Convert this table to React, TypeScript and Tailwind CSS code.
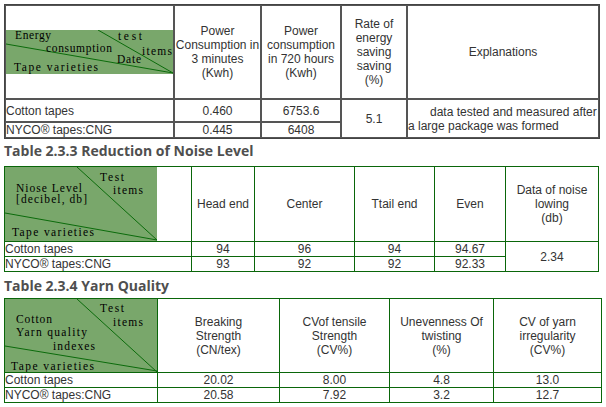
import React from "react";

const LINE = "#0b6b0b";
const FILL = "#79a76b";

type Label = { t: string; x: number; y: number; w: number };

// green diagonal header cell, drawn like the original bitmap
const DiagonalHead: React.FC<{
  w: number;
  h: number;
  lines: [number, number, number, number][];
  labels: Label[];
}> = ({ w, h, lines, labels }) => (
  <svg width={w} height={h} className="block">
    <rect x={0} y={0} width={w} height={h} fill={FILL} />
    {lines.map((l, i) => (
      <line key={i} x1={l[0]} y1={l[1]} x2={l[2]} y2={l[3]} stroke={LINE} strokeWidth={1} />
    ))}
    {labels.map((l) => (
      <text
        key={l.t}
        x={l.x}
        y={l.y}
        textLength={l.w}
        lengthAdjust="spacing"
        fontFamily='"Liberation Serif", serif'
        fontSize={11.5}
        fill="#000"
      >
        {l.t}
      </text>
    ))}
  </svg>
);

const td1 = "border border-[#555] p-0 text-center align-middle";
const td2 = "border border-[#0a660a] p-0 text-center align-middle";
const title =
  "h-[22px] text-[14px] leading-[22px] font-bold text-[#4f4f4f] font-['Open_Sans',sans-serif]";

const App: React.FC = () => {
  return (
    <div className="w-[606px] h-[407px] bg-white pl-[4px] pt-[4px] text-[12px] leading-[14px] text-[#333] font-['Liberation_Sans',Arial,sans-serif]">
      {/* Table 2.3.2 energy */}
      <table className="table-fixed border-separate border-spacing-0 border border-[#444] w-[596px]">
        <colgroup>
          <col className="w-[169px]" />
          <col className="w-[87px]" />
          <col className="w-[80px]" />
          <col className="w-[66px]" />
          <col className="w-[192px]" />
        </colgroup>
        <tbody>
          <tr className="h-[94px]">
            <td className={td1}>
              <DiagonalHead
                w={167}
                h={44}
                lines={[
                  [0, 14, 167, 43],
                  [92, 0, 167, 43],
                ]}
                labels={[
                  { t: "Energy", x: 9, y: 9, w: 36 },
                  { t: "test", x: 112, y: 9.5, w: 24 },
                  { t: "consumption", x: 40, y: 21.5, w: 66 },
                  { t: "items", x: 136, y: 24.5, w: 30 },
                  { t: "Date", x: 111, y: 32.5, w: 24 },
                  { t: "Tape varieties", x: 8, y: 41, w: 84 },
                ]}
              />
            </td>
            <td className={td1}>
              Power
              <br />
              Consumption in
              <br />3 minutes
              <br />
              (Kwh)
            </td>
            <td className={td1}>
              Power
              <br />
              consumption
              <br />
              in 720 hours
              <br />
              (Kwh)
            </td>
            <td className={td1}>
              Rate of
              <br />
              energy
              <br />
              saving
              <br />
              saving
              <br />
              (%)
            </td>
            <td className={td1}>Explanations</td>
          </tr>
          <tr className="h-[23px]">
            <td className={`${td1} text-left`}>Cotton tapes</td>
            <td className={td1}>0.460</td>
            <td className={td1}>6753.6</td>
            <td className={td1} rowSpan={2}>
              5.1
            </td>
            <td className={`${td1} text-left indent-[22px]`} rowSpan={2}>
              data tested and measured after
              <br />a large package was formed
            </td>
          </tr>
          <tr className="h-[16px]">
            <td className={`${td1} text-left`}>NYCO® tapes:CNG</td>
            <td className={td1}>0.445</td>
            <td className={td1}>6408</td>
          </tr>
        </tbody>
      </table>

      <h3 className={`mt-[1px] mb-[4px] ${title}`}>Table 2.3.3 Reduction of Noise Level</h3>

      {/* Table 2.3.3 noise */}
      <table className="table-fixed border-collapse border border-[#0a660a] w-[594px]">
        <colgroup>
          <col className="w-[187px]" />
          <col className="w-[63px]" />
          <col className="w-[100px]" />
          <col className="w-[80px]" />
          <col className="w-[71px]" />
          <col className="w-[93px]" />
        </colgroup>
        <tbody>
          <tr className="h-[75px]">
            <td className={`${td2} text-left`}>
              <DiagonalHead
                w={152}
                h={74}
                lines={[
                  [72, 0, 152, 73],
                  [0, 46, 152, 73],
                ]}
                labels={[
                  { t: "Test", x: 95, y: 13.5, w: 24 },
                  { t: "Niose Level", x: 11, y: 24.5, w: 66 },
                  { t: "items", x: 108, y: 26.5, w: 30 },
                  { t: "[decibel, db]", x: 11, y: 35.5, w: 71 },
                  { t: "Tape varieties", x: 7, y: 68.5, w: 82 },
                ]}
              />
            </td>
            <td className={td2}>Head end</td>
            <td className={td2}>Center</td>
            <td className={td2}>Ttail end</td>
            <td className={td2}>Even</td>
            <td className={td2}>
              Data of noise
              <br />
              lowing
              <br />
              (db)
            </td>
          </tr>
          <tr className="h-[15px]">
            <td className={`${td2} text-left`}>Cotton tapes</td>
            <td className={td2}>94</td>
            <td className={td2}>96</td>
            <td className={td2}>94</td>
            <td className={td2}>94.67</td>
            <td className={td2} rowSpan={2}>
              2.34
            </td>
          </tr>
          <tr className="h-[15px]">
            <td className={`${td2} text-left`}>NYCO® tapes:CNG</td>
            <td className={td2}>93</td>
            <td className={td2}>92</td>
            <td className={td2}>92</td>
            <td className={td2}>92.33</td>
          </tr>
        </tbody>
      </table>

      <h3 className={`mt-[3px] mb-[1px] ${title}`}>Table 2.3.4 Yarn Quality</h3>

      {/* Table 2.3.4 yarn */}
      <table className="table-fixed border-collapse border border-[#0a660a] w-[597px]">
        <colgroup>
          <col className="w-[153px]" />
          <col className="w-[122px]" />
          <col className="w-[110px]" />
          <col className="w-[104px]" />
          <col className="w-[108px]" />
        </colgroup>
        <tbody>
          <tr className="h-[74px]">
            <td className={`${td2} text-left`}>
              <DiagonalHead
                w={152}
                h={73}
                lines={[
                  [72, 0, 152, 73],
                  [0, 47, 152, 72],
                ]}
                labels={[
                  { t: "Test", x: 95, y: 12.5, w: 24 },
                  { t: "Cotton", x: 11, y: 23.5, w: 36 },
                  { t: "items", x: 108, y: 26.5, w: 30 },
                  { t: "Yarn quality", x: 11, y: 36.5, w: 71 },
                  { t: "indexes", x: 48, y: 50.5, w: 42 },
                  { t: "Tape varieties", x: 6, y: 70.5, w: 83 },
                ]}
              />
            </td>
            <td className={td2}>
              Breaking
              <br />
              Strength
              <br />
              (CN/tex)
            </td>
            <td className={td2}>
              CVof tensile
              <br />
              Strength
              <br />
              (CV%)
            </td>
            <td className={td2}>
              Unevenness Of
              <br />
              twisting
              <br />
              (%)
            </td>
            <td className={td2}>
              CV of yarn
              <br />
              irregularity
              <br />
              (CV%)
            </td>
          </tr>
          <tr className="h-[15px]">
            <td className={`${td2} text-left`}>Cotton tapes</td>
            <td className={td2}>20.02</td>
            <td className={td2}>8.00</td>
            <td className={td2}>4.8</td>
            <td className={td2}>13.0</td>
          </tr>
          <tr className="h-[15px]">
            <td className={`${td2} text-left`}>NYCO® tapes:CNG</td>
            <td className={td2}>20.58</td>
            <td className={td2}>7.92</td>
            <td className={td2}>3.2</td>
            <td className={td2}>12.7</td>
          </tr>
        </tbody>
      </table>
    </div>
  );
};

export default App;
